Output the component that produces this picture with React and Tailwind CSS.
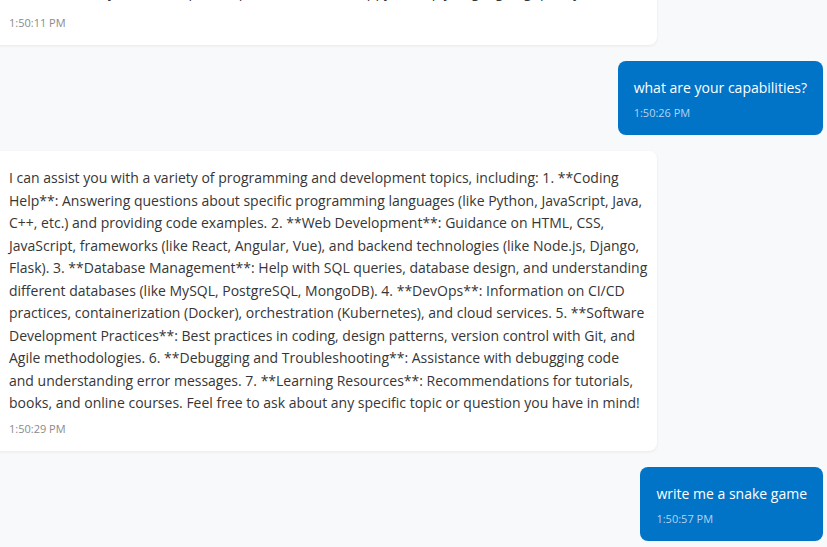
import React from "react";

const lines = [
    "I can assist you with a variety of programming and development topics, including: 1. **Coding",
    "Help**: Answering questions about specific programming languages (like Python, JavaScript, Java,",
    "C++, etc.) and providing code examples. 2. **Web Development**: Guidance on HTML, CSS,",
    "JavaScript, frameworks (like React, Angular, Vue), and backend technologies (like Node.js, Django,",
    "Flask). 3. **Database Management**: Help with SQL queries, database design, and understanding",
    "different databases (like MySQL, PostgreSQL, MongoDB). 4. **DevOps**: Information on CI/CD",
    "practices, containerization (Docker), orchestration (Kubernetes), and cloud services. 5. **Software",
    "Development Practices**: Best practices in coding, design patterns, version control with Git, and",
    "Agile methodologies. 6. **Debugging and Troubleshooting**: Assistance with debugging code",
    "and understanding error messages. 7. **Learning Resources**: Recommendations for tutorials,",
    "books, and online courses. Feel free to ask about any specific topic or question you have in mind!",
];

const BotBubble = ({ children, time }) => (
    <div className="self-start w-[80%] bg-white rounded-lg shadow-[0_1px_3px_rgba(0,0,0,0.07)] p-4">
        <div className="text-[14px] leading-[22.5px] text-[#363636]">{children}</div>
        <div className="mt-2 text-[11px] leading-3 text-[#8a8a8a]">{time}</div>
    </div>
);

const UserBubble = ({ text, time }) => (
    <div className="self-end bg-[#0174c8] rounded-lg p-4">
        <div className="text-[14px] leading-[22.5px] text-white whitespace-nowrap">{text}</div>
        <div className="mt-2 text-[11px] leading-3 text-[#b5d3ee]">{time}</div>
    </div>
);

const App = () => {
    return (
        <div
            className="h-[547px] w-[827px] overflow-hidden bg-[#f8f9fb]"
            style={{ fontFamily: '"Open Sans", "Noto Sans", sans-serif' }}
        >
            <div className="flex flex-col gap-4 ml-[-7px] mr-1 mt-[-30px]">
                <BotBubble time="1:50:11 PM">
                    <span className="block whitespace-nowrap translate-y-[-5px]">
                        Let me know if you have a specific question, and I'm happy to help you get going quickly!
                    </span>
                </BotBubble>

                <UserBubble text="what are your capabilities?" time="1:50:26 PM" />

                <BotBubble time="1:50:29 PM">
                    {lines.map((line, i) => (
                        <span key={i} className="block whitespace-nowrap">
                            {line}
                        </span>
                    ))}
                </BotBubble>

                <UserBubble text="write me a snake game" time="1:50:57 PM" />
            </div>
        </div>
    );
};

export default App;
